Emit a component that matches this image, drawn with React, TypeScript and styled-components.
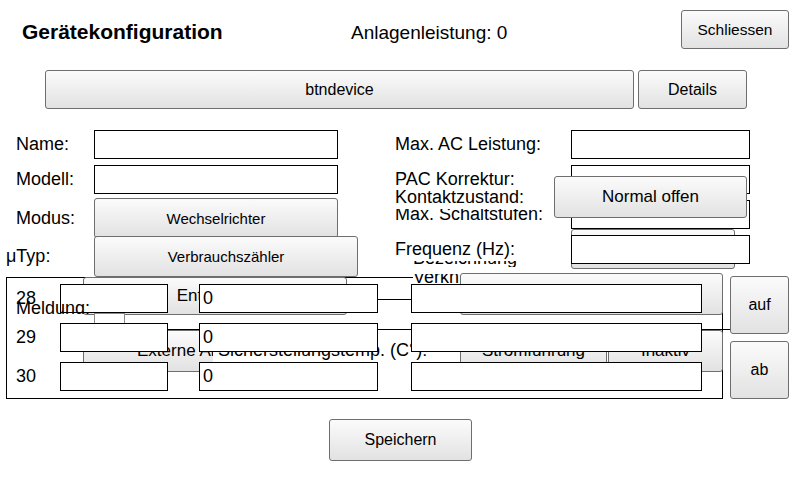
import React from "react";
import styled, { createGlobalStyle } from "styled-components";

const GlobalStyle = createGlobalStyle`
  html, body { margin: 0; padding: 0; background: #fff; }
  body { font-family: "Liberation Sans", Arial, sans-serif; color: #000; }
  * { box-sizing: border-box; }
`;

const Page = styled.div`
  position: relative;
  width: 800px;
  height: 480px;
  overflow: hidden;
  display: flex;
  flex-direction: column;
  padding-top: 10px;
`;

const Button = styled.button<{ $w: number; $h: number; $fs?: number }>`
  position: relative;
  flex: none;
  width: ${(p) => p.$w}px;
  height: ${(p) => p.$h}px;
  margin: 0;
  padding: 0;
  border: 1px solid #6e6e6e;
  border-radius: 3px;
  background: linear-gradient(#fbfbfb, #e2e2e2);
  font-family: inherit;
  font-size: ${(p) => p.$fs ?? 16}px;
  color: #000;
  display: flex;
  align-items: center;
  justify-content: center;
  white-space: nowrap;
  overflow: hidden;
`;

/* ---------- header ---------- */
const Header = styled.header`
  display: flex;
  align-items: flex-start;
  height: 39px;
  padding: 0 11px 0 22px;
`;
const Title = styled.h1`
  margin: 10px 0 0;
  width: 329px;
  font-size: 21px;
  line-height: 24px;
  font-weight: bold;
`;
const Info = styled.div`
  flex: 1;
  margin-top: 12px;
  font-size: 19px;
  line-height: 22px;
`;

const DeviceRow = styled.div`
  display: flex;
  gap: 4px;
  margin-top: 21px;
  padding-left: 45px;
  height: 39px;
`;

/* ---------- form ---------- */
const FormArea = styled.section`
  display: grid;
  grid-template-columns: 379px 1fr;
  margin-top: 21px;
  padding-left: 16px;
  height: 147px;
`;
const Column = styled.div`
  display: flex;
  flex-direction: column;
`;
const FieldRow = styled.div<{ $label: number; $gap?: number }>`
  display: grid;
  grid-template-columns: ${(p) => p.$label}px auto;
  align-items: center;
  margin-top: ${(p) => p.$gap ?? 0}px;
`;
const Label = styled.label<{ $shift?: number }>`
  position: relative;
  font-size: 18px;
  line-height: 21px;
  white-space: nowrap;
  margin-left: ${(p) => p.$shift ?? 0}px;
`;
const Field = styled.input<{ $w: number }>`
  position: relative;
  width: ${(p) => p.$w}px;
  height: 29px;
  margin: 0;
  padding: 0 3px;
  border: 1px solid #000;
  border-radius: 0;
  background: #fff;
  font-family: inherit;
  font-size: 18px;
  color: #000;
  outline: none;
`;

/* ---------- group ---------- */
const GroupRow = styled.div`
  display: flex;
  gap: 7px;
  padding-left: 6px;
  height: 122px;
`;
const GroupBox = styled.fieldset`
  width: 717px;
  height: 122px;
  margin: 0;
  padding: 6px 0 0 9px;
  border: 1px solid #000;
  display: flex;
  flex-direction: column;
  gap: 10px;
`;
const GroupLine = styled.div`
  display: grid;
  grid-template-columns: 44px 139px 212px 291px;
  align-items: center;
  height: 29px;
`;
const ArrowCol = styled.div`
  display: flex;
  flex-direction: column;
  gap: 7px;
  margin-top: -1px;
`;
const Footer = styled.footer`
  margin-top: 20px;
  padding-left: 329px;
`;

/* ---------- stacked (hidden / overlapping) controls ---------- */
const Layer = styled.div`
  position: absolute;
  inset: 0;
  pointer-events: none;
`;
const StackButton = styled(Button)<{ $x: number; $y: number }>`
  position: absolute;
  left: ${(p) => p.$x}px;
  top: ${(p) => p.$y}px;
`;
const StackLine = styled.div<{ $x: number; $y: number; $w: number }>`
  position: absolute;
  left: ${(p) => p.$x}px;
  top: ${(p) => p.$y}px;
  width: ${(p) => p.$w}px;
  height: 1px;
  background: #000;
`;
const StackBox = styled.div<{ $x: number; $y: number; $w: number; $h: number }>`
  position: absolute;
  left: ${(p) => p.$x}px;
  top: ${(p) => p.$y}px;
  width: ${(p) => p.$w}px;
  height: ${(p) => p.$h}px;
  border: 1px solid #8a8a8a;
  background: #fff;
`;
const StackText = styled.div<{ $x: number; $y: number; $w: number; $h: number; $shift: number; $bg?: boolean }>`
  position: absolute;
  left: ${(p) => p.$x}px;
  top: ${(p) => p.$y}px;
  width: ${(p) => p.$w}px;
  height: ${(p) => p.$h}px;
  overflow: hidden;
  background: ${(p) => (p.$bg ? "#fff" : "transparent")};
  font-size: 18px;
  line-height: 21px;
  white-space: nowrap;
  & > span {
    display: block;
    margin-top: ${(p) => p.$shift}px;
  }
`;

const rows = ["28", "29", "30"];

export default function App() {
  return (
    <>
      <GlobalStyle />
      <Page>
        <Layer>
          <StackLine $x={125} $y={329} $w={605} />
          <StackLine $x={347} $y={299} $w={113} />
          <StackButton $x={571} $y={229} $w={164} $h={40} />
          <StackText $x={413} $y={261} $w={110} $h={6} $shift={-13}>
            <span>Bezeichnung</span>
          </StackText>
          <StackButton $x={83} $y={277} $w={264} $h={38} $fs={17}>
            Entladung
          </StackButton>
          <StackBox $x={94} $y={313} $w={31} $h={12} />
          <StackButton $x={460} $y={273} $w={263} $h={42} />
          <StackText $x={413} $y={274} $w={47} $h={10} $shift={-7} $bg>
            <span>Verknüpfung</span>
          </StackText>
          <StackButton $x={83} $y={330} $w={264} $h={42} $fs={17}>
            Externe Abschaltung
          </StackButton>
          <StackButton $x={460} $y={330} $w={147} $h={42} $fs={17}>
            Stromführung
          </StackButton>
          <StackButton $x={608} $y={330} $w={115} $h={42} $fs={17}>
            Inaktiv
          </StackButton>
          <StackText $x={213} $y={340} $w={247} $h={22} $shift={0} $bg>
            <span>&nbsp;Sicherstellungstemp. (C°):</span>
          </StackText>
        </Layer>

        <Header>
          <Title>Gerätekonfiguration</Title>
          <Info>Anlagenleistung: 0</Info>
          <Button $w={108} $h={39} $fs={15.5}>
            Schliessen
          </Button>
        </Header>

        <DeviceRow>
          <Button $w={589} $h={39}>
            btndevice
          </Button>
          <Button $w={109} $h={39}>
            Details
          </Button>
        </DeviceRow>

        <FormArea>
          <Column>
            <FieldRow $label={78}>
              <Label>Name:</Label>
              <Field $w={244} readOnly />
            </FieldRow>
            <FieldRow $label={78} $gap={6}>
              <Label>Modell:</Label>
              <Field $w={244} readOnly />
            </FieldRow>
            <FieldRow $label={78} $gap={4}>
              <Label>Modus:</Label>
              <Button $w={244} $h={40} $fs={15}>
                Wechselrichter
              </Button>
            </FieldRow>
            <FieldRow $label={78} $gap={-2}>
              <Label $shift={-10}>μTyp:</Label>
              <Button $w={264} $h={41} $fs={15}>
                Verbrauchszähler
              </Button>
            </FieldRow>
          </Column>
          <Column>
            <FieldRow $label={176}>
              <Label>Max. AC Leistung:</Label>
              <Field $w={179} readOnly />
            </FieldRow>
            <FieldRow $label={176} $gap={6}>
              <Label>PAC Korrektur:</Label>
              <Field $w={179} readOnly />
            </FieldRow>
            <FieldRow $label={176} $gap={6}>
              <Label>Max. Schaltstufen:</Label>
              <Field $w={179} readOnly />
            </FieldRow>
            <FieldRow $label={176} $gap={6}>
              <Label>Frequenz (Hz):</Label>
              <Field $w={179} readOnly />
            </FieldRow>
          </Column>
        </FormArea>

        <GroupRow>
          <GroupBox>
            {rows.map((r) => (
              <GroupLine key={r}>
                <Label>{r}</Label>
                <Field $w={108} readOnly />
                <Field $w={179} value="0" readOnly />
                <Field $w={291} readOnly />
              </GroupLine>
            ))}
          </GroupBox>
          <ArrowCol>
            <Button $w={59} $h={58}>
              auf
            </Button>
            <Button $w={59} $h={58}>
              ab
            </Button>
          </ArrowCol>
        </GroupRow>

        <Footer>
          <Button $w={143} $h={42}>
            Speichern
          </Button>
        </Footer>

        <Layer>
          <StackText $x={16} $y={298} $w={90} $h={16} $shift={0}>
            <span>Meldung:</span>
          </StackText>
          <StackText $x={395} $y={187} $w={159} $h={22} $shift={0} $bg>
            <span>Kontaktzustand:</span>
          </StackText>
          <StackButton $x={554} $y={176} $w={193} $h={42} $fs={17}>
            Normal offen
          </StackButton>
        </Layer>
      </Page>
    </>
  );
}
